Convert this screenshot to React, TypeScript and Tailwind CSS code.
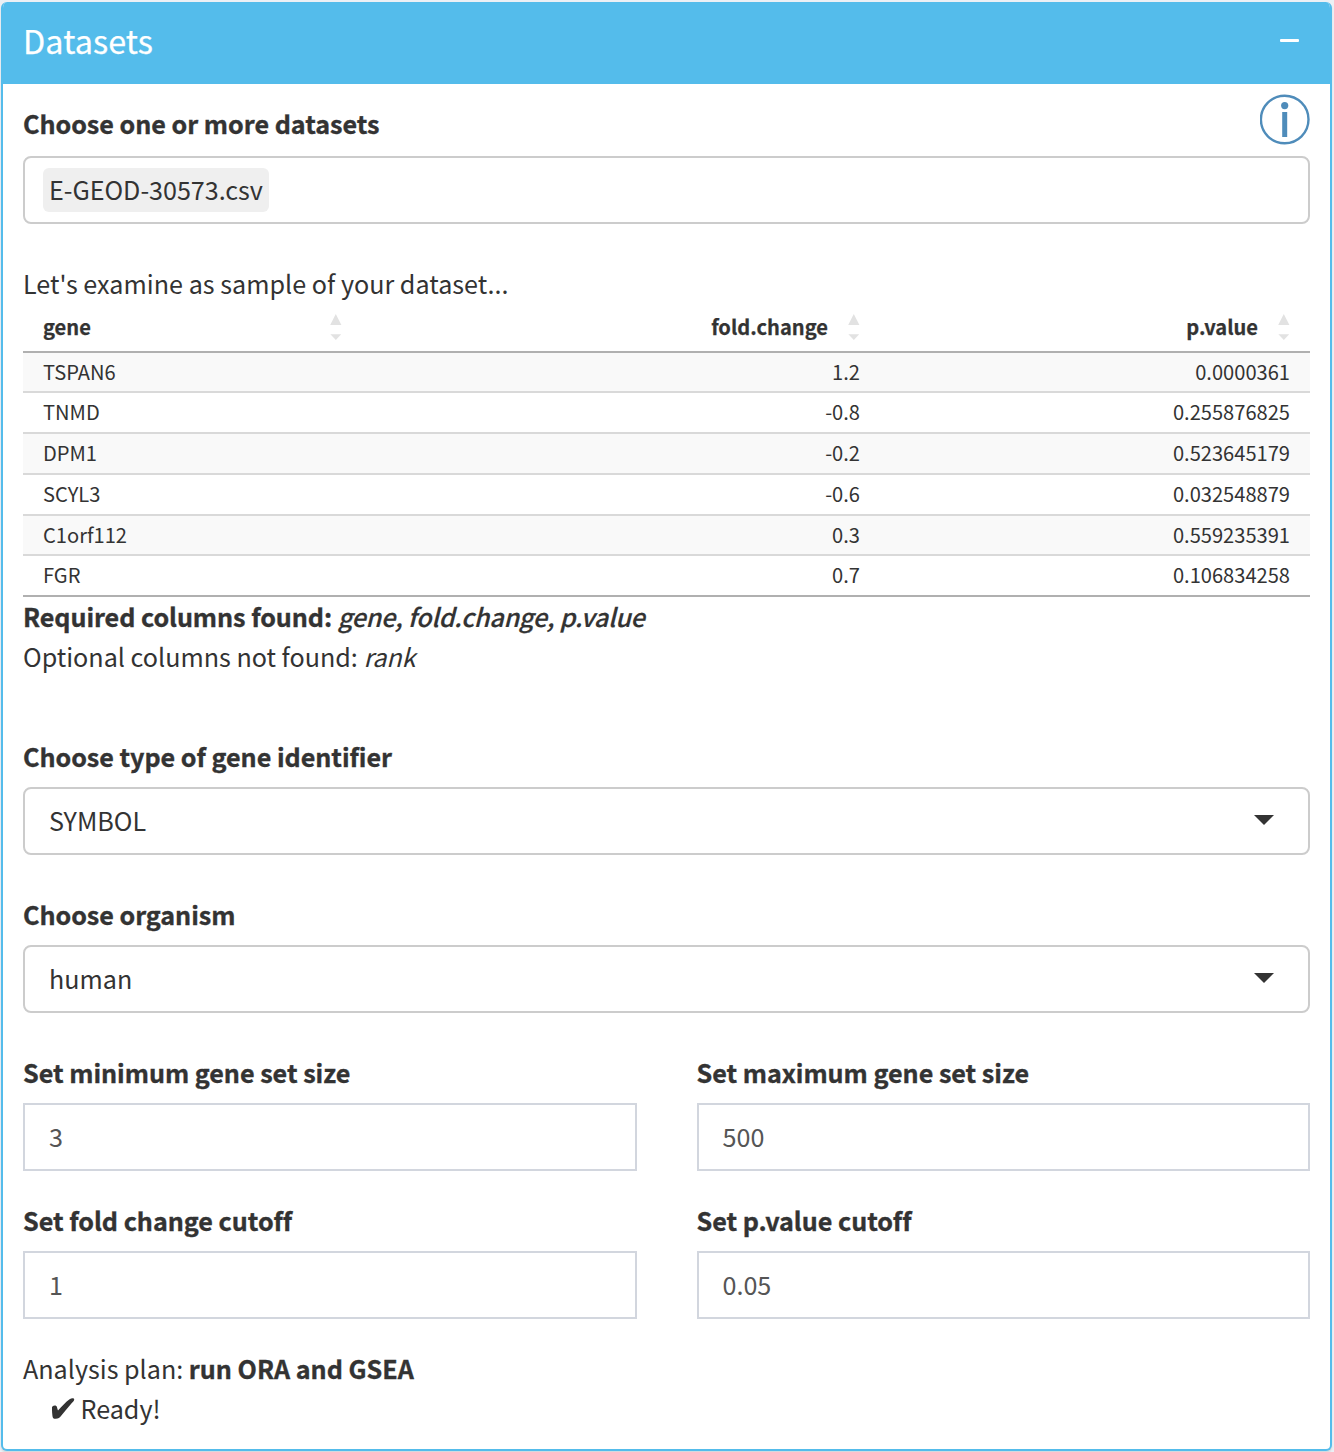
import React from "react";

const rows = [
  { gene: "TSPAN6", fold: "1.2", p: "0.0000361", height: "h-[38px]" },
  { gene: "TNMD", fold: "-0.8", p: "0.255876825", height: "h-[39px] pb-px" },
  { gene: "DPM1", fold: "-0.2", p: "0.523645179", height: "h-[39px] pb-px" },
  { gene: "SCYL3", fold: "-0.6", p: "0.032548879", height: "h-[39px] pb-px" },
  { gene: "C1orf112", fold: "0.3", p: "0.559235391", height: "h-[38px]" },
  { gene: "FGR", fold: "0.7", p: "0.106834258", height: "h-[39px] pb-px" },
];

function SortIcon() {
  return (
    <svg width="12" height="26" viewBox="0 0 12 26" fill="#e2e2e2" className="shrink-0">
      <path d="M5.8 0 L11.4 11 H0.2 Z" />
      <path d="M0.4 20.2 H11.2 L5.8 26 Z" />
    </svg>
  );
}

function Label({ children }: { children: React.ReactNode }) {
  return (
    <div className="h-10 font-bold leading-9 tracking-[-0.02px] [-webkit-text-stroke:0.35px_#333]">{children}</div>
  );
}

function Select({ value }: { value: string }) {
  return (
    <div className="mt-[9px] flex h-[68px] items-center justify-between rounded-lg border-2 border-[#ccc] bg-white pl-6 pr-[34px]">
      <span>{value}</span>
      <svg width="20" height="10" viewBox="0 0 20 10" fill="#333" className="-mt-[2px]">
        <path d="M0 0 H20 L10 10 Z" />
      </svg>
    </div>
  );
}

function NumberField({ label, value }: { label: string; value: string }) {
  return (
    <div>
      <Label>{label}</Label>
      <div className="mt-[9px] flex h-[68px] items-center border-2 border-[#d2d6de] bg-white pl-6 text-[#555]">
        {value}
      </div>
    </div>
  );
}

export default function App() {
  return (
    <div className="h-[1452px] w-[1334px] overflow-hidden bg-[#ecf0f5] pl-px pt-[2px] font-['Noto_Sans_CJK_SC','Noto_Sans',sans-serif] text-[25.13px] text-[#333]">
      <div className="h-[1449px] w-[1331px] overflow-hidden rounded-md border-2 border-t-0 border-[#54bceb] bg-white shadow-[0_2px_2px_rgba(0,0,0,0.1)]">
        <header className="flex h-[82px] items-center justify-between bg-[#54bceb] pb-[3px] pl-5 pr-[31px] text-white">
          <h3 className="-mt-1 text-[32.3px] leading-9 tracking-[0.12px] [-webkit-text-stroke:0.25px_#fff]">Datasets</h3>
          <span className="-mt-[3px] h-[3px] w-[19px] rounded-[1px] bg-white" />
        </header>

        <main className="px-5">
          <div className="flex h-[72px] justify-between">
            <div className="pt-[21px]">
              <Label>Choose one or more datasets</Label>
            </div>
            <svg width="51" height="51" viewBox="0 0 51 51" className="-mr-px mt-[10px]" fill="#4f8cba">
              <circle cx="24.7" cy="25.5" r="23.8" fill="none" stroke="#4f8cba" strokeWidth="2.4" />
              <circle cx="24.7" cy="11.6" r="3.6" />
              <rect x="22.2" y="18" width="5" height="25" />
            </svg>
          </div>

          <div className="flex h-[68px] items-center rounded-lg border-2 border-[#ccc] pl-[18px]">
            <span className="flex h-11 items-center rounded-md bg-[#efefef] px-[6px] tracking-[-0.03px]">E-GEOD-30573.csv</span>
          </div>

          <p className="mt-[41px] h-10 leading-9 tracking-[0.02px]">Let's examine as sample of your dataset...</p>

          <div className="text-[20.1px] leading-[30px]">
            <div className="grid h-[48px] grid-cols-[339px_518px_430px] items-center border-b-2 border-[#b0b0b0] pb-[2px] font-bold [-webkit-text-stroke:0.25px_#333]">
              <div className="flex items-center justify-between pl-5 pr-5">
                gene <SortIcon />
              </div>
              <div className="flex items-center justify-end gap-5 pr-5">
                fold.change <SortIcon />
              </div>
              <div className="flex items-center justify-end gap-5 pr-5">
                p.value <SortIcon />
              </div>
            </div>
            {rows.map((r, i) => (
              <div
                key={r.gene}
                className={`${i % 2 === 0 ? "bg-[#f9f9f9]" : "bg-white"} border-b-2 ${
                  i === rows.length - 1 ? "border-[#b0b0b0]" : "border-[#d9d9d9]"
                }`}
              >
                <div className={`grid grid-cols-[339px_518px_430px] items-center ${r.height}`}>
                  <span className="pl-5">{r.gene}</span>
                  <span className="pr-5 text-right">{r.fold}</span>
                  <span className="pr-5 text-right">{r.p}</span>
                </div>
              </div>
            ))}
          </div>

          <p className="mt-px h-10 leading-9">
            <b className="font-bold tracking-[-0.05px] [-webkit-text-stroke:0.35px_#333]">Required columns found:</b>{" "}
            <em className="font-medium tracking-[-0.22px] [-webkit-text-stroke:0.2px_#333]">gene, fold.change, p.value</em>
          </p>
          <p className="h-10 leading-9">
            Optional columns not found: <em className="tracking-[-0.2px]">rank</em>
          </p>

          <div className="mt-[60px]">
            <Label>Choose type of gene identifier</Label>
            <Select value="SYMBOL" />
          </div>
          <div className="mt-[41px]">
            <Label>Choose organism</Label>
            <Select value="human" />
          </div>

          <div className="mt-[41px] grid grid-cols-2 gap-x-[60px] gap-y-[31px]">
            <NumberField label="Set minimum gene set size" value="3" />
            <NumberField label="Set maximum gene set size" value="500" />
            <NumberField label="Set fold change cutoff" value="1" />
            <NumberField label="Set p.value cutoff" value="0.05" />
          </div>

          <p className="mt-[31px] h-10 leading-9">
            Analysis plan: <b className="font-bold [-webkit-text-stroke:0.35px_#333]">run ORA and GSEA</b>
          </p>
          <p className="flex h-9 items-center gap-[5.5px] pl-7 leading-9">
            <svg width="24" height="22" viewBox="0 0 24 22" fill="#333" className="mt-[2px]">
              <path d="M1 9.6 C1.2 7.2 5 6.6 5.8 8.6 C6.2 9.8 6.3 11 7 12.4 C10.6 8.4 14.8 4 18.6 1.2 C20.4 0.1 23.4 -0.2 23.2 1.8 C23.1 3 21.4 4.4 20 6 C16.8 9.8 13.4 13.8 10.4 17.6 C8.6 19.8 7.4 20.8 4.8 20.8 C2.4 20.8 1.8 20.2 1.4 17.4 C1.1 14.8 0.9 12 1 9.6 Z" />
            </svg>
            <span>Ready!</span>
          </p>
        </main>
      </div>
    </div>
  );
}
